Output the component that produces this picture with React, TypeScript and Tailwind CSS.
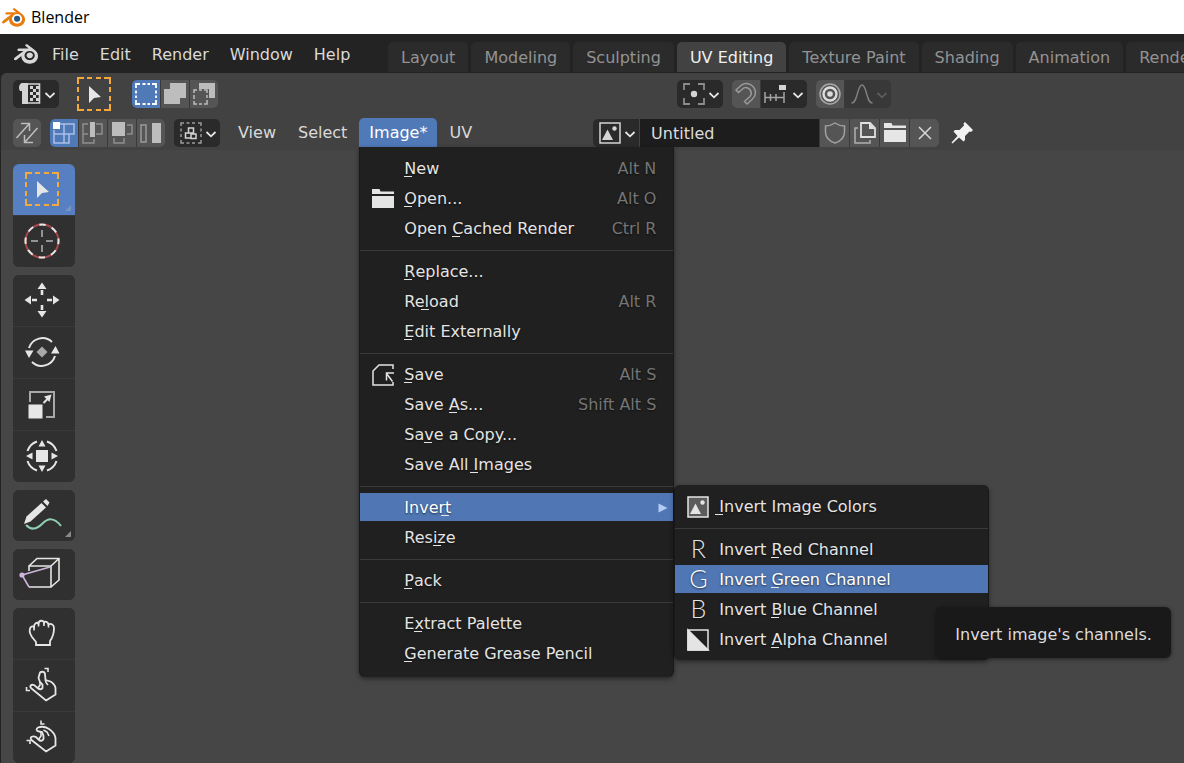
import React from 'react';
import clsx from 'clsx';
import { SiBlender } from 'react-icons/si';

interface MenuEntry {
  label: string;
  // index of the underlined accelerator letter
  hot: number;
  keys?: string;
  icon?: React.ReactNode;
  active?: boolean;
  submenu?: React.ReactNode;
  tip?: string;
}

interface IconProps {
  children: React.ReactNode;
}

const Icon: React.FC<IconProps> = ({ children }) => (
  <svg viewBox="0 0 22 22" className="h-[22px] w-[22px] shrink-0 overflow-visible" fill="none" stroke="currentColor" strokeWidth={1.5}>
    {children}
  </svg>
);

/* Toolbar drawings use a canvas centred on 0,0 */
const ToolIcon: React.FC<IconProps> = ({ children }) => (
  <svg viewBox="-20 -20 40 40" className="h-10 w-10 shrink-0 overflow-visible" fill="none" stroke="#e6e6e6" strokeWidth={2}>
    {children}
  </svg>
);

const Chevron = ({ dim }: { dim?: boolean }) => (
  <svg viewBox="0 0 12 12" className={clsx('mt-[2px] h-3 w-3 shrink-0', dim ? 'text-[#5c5c5c]' : 'text-[#e6e6e6]')} fill="none" stroke="currentColor" strokeWidth={1.8}>
    <path d="M1.5 4 6 8.3 10.5 4" />
  </svg>
);

const FolderIcon = () => (
  <Icon>
    <path d="M0 6V1h7.5l1 2.500H22V6zM0 8h22v12H0z" fill="currentColor" stroke="none" />
  </Icon>
);

const SaveIcon = () => (
  <Icon>
    <path d="M21 5V1H7L1 7v14h20v-3" />
    <path d="M20.500 17.500 14.500 9.500M14.500 16.500V9H22" />
  </Icon>
);

const PictureIcon = ({ filled }: { filled?: boolean }) => (
  <Icon>
    <rect x="1" y="1" width="20" height="20" fill={filled ? '#5c5c5c' : 'none'} />
    <path d="M3 18 8.500 7.500 14 18z" fill="currentColor" stroke="none" />
    <circle cx="15.500" cy="6.500" r="2.200" fill="currentColor" stroke="none" />
  </Icon>
);

const AlphaIcon = () => (
  <Icon>
    <rect x="1" y="1" width="20" height="20" />
    <path d="M1 1v20h20z" fill="currentColor" />
  </Icon>
);

const Letter = ({ children }: { children: string }) => (
  <span aria-hidden="true" className="w-[22px] pb-1 text-center font-['Lato',sans-serif] text-[25px] leading-6 font-light">{children}</span>
);

const BoxSelectArt = ({ color = '#f5a93a' }: { color?: string }) => (
  <>
    <path d="M-16 -10V-16H-10M10 -16H16V-10M16 10V16H10M-10 16H-16V10" stroke={color} />
    <path d="M-7 -16H-2M2 -16H7M-7 16H-2M2 16H7M-16 -7V-2M-16 2V7M16 -7V-2M16 2V7" stroke={color} />
    <path d="M-5 -8V9L0 4 7 3z" fill="#e6e6e6" stroke="none" />
  </>
);

const TABS = ['Layout', 'Modeling', 'Sculpting', 'UV Editing', 'Texture Paint', 'Shading', 'Animation', 'Rendering'];

const MenuItem: React.FC<MenuEntry> = ({ label, hot, keys, icon, active, submenu, tip }) => {
  const thin = 'Iltz'.includes(label[hot]);
  return (
    <li role="none" className="relative py-px">
      <button
        role="menuitem"
        type="button"
        aria-haspopup={submenu ? 'menu' : undefined}
        className={clsx(
          'flex h-7 w-full items-center pt-[2px] pr-[17px] pl-3 text-left [text-shadow:0_1px_2px_rgba(0,0,0,0.6)]',
          active ? 'bg-[#5077b3] text-white' : 'text-[#e4e4e4]',
        )}
      >
        <span className="mr-[10px] flex w-[22px] shrink-0">{icon}</span>
        <span className="flex-1 whitespace-pre">
          {label.slice(0, hot)}
          <span className={clsx("relative after:absolute after:bottom-px after:h-px after:w-2 after:bg-[#e4e4e4] after:content-['']", thin ? 'after:-left-1' : 'after:left-0')}>
            {label[hot]}
          </span>
          {label.slice(hot + 1)}
        </span>
        {keys && <span className="text-[#757575]">{keys}</span>}
        {submenu && (
          <svg viewBox="0 0 10 10" className="-mr-3 h-[10px] w-[10px] fill-[#b4cbf5]">
            <path d="M0.500 0.500 9.500 5 0.500 9.500z" />
          </svg>
        )}
      </button>
      {submenu}
      {tip && (
        <div role="tooltip" className="absolute top-[43px] left-[261px] z-30 rounded-md bg-[#191919] px-[19px] pt-4 pb-[11px] leading-6 whitespace-nowrap text-[#dcdcdc] shadow-[0_1px_4px_rgba(0,0,0,0.5)]">
          {tip}
        </div>
      )}
    </li>
  );
};

const Menu = ({ groups, label, className }: { groups: MenuEntry[][]; label: string; className: string }) => (
  <ul role="menu" aria-label={label} className={clsx('absolute z-20 w-[315px] border-x border-[#191919] bg-[#202020] pt-[6px] shadow-[0_2px_5px_rgba(0,0,0,0.45)]', className)}>
    {groups.map((group, i) => (
      <React.Fragment key={i}>
        {i > 0 && <li role="separator" className="mt-[7px] mb-[5px] h-px bg-[#3a3a3a]" />}
        {group.map((entry) => (
          <MenuItem key={entry.label} {...entry} />
        ))}
      </React.Fragment>
    ))}
  </ul>
);

const invertGroups: MenuEntry[][] = [
  [{ label: 'Invert Image Colors', hot: 0, icon: <PictureIcon filled /> }],
  [
    { label: 'Invert Red Channel', hot: 7, icon: <Letter>R</Letter> },
    { label: 'Invert Green Channel', hot: 7, icon: <Letter>G</Letter>, active: true, tip: "Invert image's channels." },
    { label: 'Invert Blue Channel', hot: 7, icon: <Letter>B</Letter> },
    { label: 'Invert Alpha Channel', hot: 7, icon: <AlphaIcon /> },
  ],
];

const imageGroups: MenuEntry[][] = [
  [
    { label: 'New', hot: 0, keys: 'Alt N' },
    { label: 'Open...', hot: 0, keys: 'Alt O', icon: <FolderIcon /> },
    { label: 'Open Cached Render', hot: 5, keys: 'Ctrl R' },
  ],
  [
    { label: 'Replace...', hot: 0 },
    { label: 'Reload', hot: 2, keys: 'Alt R' },
    { label: 'Edit Externally', hot: 0 },
  ],
  [
    { label: 'Save', hot: 0, keys: 'Alt S', icon: <SaveIcon /> },
    { label: 'Save As...', hot: 5, keys: 'Shift Alt S' },
    { label: 'Save a Copy...', hot: 2 },
    { label: 'Save All Images', hot: 9 },
  ],
  [
    {
      label: 'Invert',
      hot: 5,
      active: true,
      submenu: <Menu label="Invert" groups={invertGroups} className="-top-[7px] left-[314px] rounded-md pb-[6px]" />,
    },
    { label: 'Resize', hot: 4 },
  ],
  [{ label: 'Pack', hot: 0 }],
  [
    { label: 'Extract Palette', hot: 1 },
    { label: 'Generate Grease Pencil', hot: 0 },
  ],
];

interface HeaderButtonProps {
  label: string;
  children: React.ReactNode;
  active?: boolean;
  wide?: boolean;
}

const HeaderButton: React.FC<HeaderButtonProps> = ({ label, children, active, wide }) => (
  <button
    type="button"
    aria-label={label}
    className={clsx('flex h-7 items-center justify-center', wide ? 'w-[29px]' : 'w-7', active ? 'bg-[#5079b8] text-white' : 'bg-[#555555] text-[#bdbdbd]')}
  >
    {children}
  </button>
);

const Picker: React.FC<{ label: string; children: React.ReactNode; dim?: boolean; className?: string }> = ({ label, children, dim, className = 'rounded-[5px]' }) => (
  <button
    type="button"
    aria-label={label}
    aria-haspopup="menu"
    className={clsx('flex h-7 items-center gap-[3px] pr-[3px] pl-[6px]', dim ? 'bg-[#383838] text-[#808080]' : 'bg-[#2a2a2a] text-[#d4d4d4]', className)}
  >
    {children}
    <Chevron dim={dim} />
  </button>
);

const Group = ({ children, className }: { children: React.ReactNode; className?: string }) => (
  <div className={clsx('flex gap-px overflow-hidden rounded-[5px] bg-[#3a3a3a]', className)}>{children}</div>
);

const ToolSettings = () => (
  <div className="flex h-[42px] items-center pl-3">
    <Picker label="Editor type">
      <Icon>
        <path d="M5 1H20.500V20H9" strokeWidth={1.600} />
        <path d="M3 0H9V21H3V8H1C-0.500 6 -0.500 1 3 0z" fill="currentColor" stroke="none" />
        <path d="M11 3h3v3h-3zM17 3h3v3h-3zM14 6h3v3h-3zM11 9h3v3h-3zM17 9h3v3h-3zM14 12h3v3h-3zM11 15h3v3h-3zM17 15h3v3h-3z" fill="currentColor" stroke="none" />
      </Icon>
    </Picker>
    <div className="ml-[15px] flex h-10 w-10 items-center justify-center">
      <ToolIcon>
        <BoxSelectArt />
      </ToolIcon>
    </div>
    <Group className="ml-[18px]">
      <HeaderButton label="Set selection" active>
        <Icon>
          <path d="M1 5V1H5M17 1H21V5M21 17V21H17M5 21H1V17M7.500 1H10.500M12.500 1H15M7.500 21H10.500M12.500 21H15M1 7.500V10.500M1 12.500V15M21 7.500V10.500M21 12.500V15" strokeWidth={1.800} />
        </Icon>
      </HeaderButton>
      <HeaderButton label="Extend selection">
        <Icon>
          <path d="M6 0H22V15H16V21H0V6H6z" fill="currentColor" stroke="none" />
        </Icon>
      </HeaderButton>
      <HeaderButton label="Subtract selection">
        <Icon>
          <path d="M6 0H22V15H16V6H6z" fill="currentColor" stroke="none" />
          <path d="M1 10V7H4M6 7H9M11 7H14V10M14 12V15M14 17V21H11M9 21H6M4 21H1V18M1 16V12" />
        </Icon>
      </HeaderButton>
    </Group>
    <div className="ml-[459px] flex gap-[9px]">
      <Picker label="Pivot point">
        <Icon>
          <path d="M1 7V1H7M15 1H21V7M21 15V21H15M7 21H1V15" stroke="#8c8c8c" strokeWidth={1.800} />
          <circle cx="11" cy="11" r="3.200" fill="currentColor" stroke="none" />
        </Icon>
      </Picker>
      <Group>
        <HeaderButton label="Snap">
          <Icon>
            <path d="M1 7 6.500 2C12 -1.500 20 2 20.500 9.500 20.500 12 19 14.500 17.500 16L12 21 9.500 18.500 15 13.500C18 10 15 4.500 10.500 4.500 9.500 4.500 8.500 5 7.500 6L3.500 9.500z" stroke="#9a9a9a" />
          </Icon>
        </HeaderButton>
        <Picker label="Snap target" className="">
          <Icon>
            <path d="M-2 9V20M3.500 11V18M9 11V18M17 9V20M-2 14.500H17" stroke="#a5a5a5" />
            <path d="M12 2h7v5h-7z" fill="currentColor" stroke="none" />
          </Icon>
        </Picker>
      </Group>
      <Group>
        <HeaderButton label="Proportional editing">
          <Icon>
            <circle cx="11" cy="11" r="10" stroke="#a8a8a8" />
            <circle cx="11" cy="11" r="6.500" stroke="#dcdcdc" strokeWidth={2.400} />
            <circle cx="11" cy="11" r="2.800" fill="#dcdcdc" stroke="none" />
          </Icon>
        </HeaderButton>
        <Picker label="Proportional falloff" dim className="">
          <Icon>
            <path d="M0.500 20C7 20 6 2 11 2S15 20 21.500 20" />
          </Icon>
        </Picker>
      </Group>
    </div>
  </div>
);

const EditorHeader = () => (
  <div className="flex h-[35px] items-center pl-3 text-[#dadada]">
    <Group>
      <HeaderButton label="Sync selection">
        <Icon>
          <path d="M0.500 16 13 2M5 1.500H13.500V9M21.500 6 9 20M8.500 13V20.500H17" />
        </Icon>
      </HeaderButton>
    </Group>
    <Group className="ml-[9px]">
      <HeaderButton label="Vertex select" active>
        <Icon>
          <path d="M7 2H21V12H6M11 2V21M1 8V21H16V12M1 12H11" stroke="#a9c0e6" />
          <path d="M0 0h7v7H0z" fill="currentColor" stroke="none" />
        </Icon>
      </HeaderButton>
      <HeaderButton label="Edge select">
        <Icon>
          <path d="M6 2H1V12H6M1 12V21H12V17M14 2H20V12H14" stroke="#8e8e8e" />
          <path d="M8 0h5v15H8z" fill="currentColor" stroke="none" />
        </Icon>
      </HeaderButton>
      <HeaderButton label="Face select">
        <Icon>
          <path d="M16 3H21V12H16M3 16V21H13V16" stroke="#8e8e8e" />
          <path d="M1 0h13v14H1z" fill="currentColor" stroke="none" />
        </Icon>
      </HeaderButton>
      <HeaderButton label="Island select">
        <Icon>
          <path d="M1 3H6V20H1z" stroke="#9a9a9a" />
          <path d="M12 1h9v20h-9z" fill="currentColor" stroke="none" />
        </Icon>
      </HeaderButton>
    </Group>
    <div className="ml-[9px]">
      <Picker label="Sticky selection mode">
        <Icon>
          <path d="M1 4V1H4M6.500 1H9.500M12 1H15M18 1H21V4M21 6.500V9.500M21 12V15M21 18V21H18M15 21H12M9.500 21H6.500M4 21H1V18M1 15V12M1 9.500V6.500" stroke="#9a9a9a" />
          <path d="M8.500 6H13.500V11H8.500zM5.500 11H11V16H5.500zM11 12H16V16.500H11z" />
        </Icon>
      </Picker>
    </div>
    <nav aria-label="Editor menus" className="ml-[8px] flex gap-[2px]">
      <button type="button" className="h-[29px] px-[10px] pt-px">View</button>
      <button type="button" className="h-[29px] px-[10px] pt-px">Select</button>
      <div className="relative">
        <button type="button" aria-haspopup="menu" aria-expanded="true" className="h-[29px] rounded-t-[5px] bg-[#5079b8] px-[10px] pt-px text-white">
          Image*
        </button>
        <Menu label="Image" groups={imageGroups} className="top-[29px] left-0 rounded-b-md pb-[9px]" />
      </div>
      <button type="button" className="h-[29px] px-[10px] pt-px">UV</button>
    </nav>
    <div className="ml-[111px] flex overflow-hidden rounded-[5px]">
      <Picker label="Browse image" className="">
        <PictureIcon />
      </Picker>
      <input aria-label="Image name" defaultValue="Untitled" className="h-7 w-[180px] border-l border-[#444444] bg-[#1d1d1d] pt-px pl-[11px] text-[#dcdcdc] outline-none" />
      <div className="flex gap-px bg-[#3a3a3a] pl-px">
        <HeaderButton label="Fake user" wide>
          <Icon>
            <path d="M11 1C8 3 5 4 1.500 4V10C1.500 15 5 19 11 21 17 19 20.500 15 20.500 10V4C17 4 14 3 11 1z" stroke="#a0a0a0" />
          </Icon>
        </HeaderButton>
        <HeaderButton label="New image" wide>
          <Icon>
            <path d="M7 1H16L21 6V15H7z" stroke="#e0e0e0" strokeWidth={1.800} />
            <path d="M15 1v6h6z" fill="#e0e0e0" stroke="none" />
            <path d="M4 6H1V21H16V18" stroke="#b0b0b0" />
          </Icon>
        </HeaderButton>
        <HeaderButton label="Open image" wide>
          <span className="flex text-[#e6e6e6]">
            <FolderIcon />
          </span>
        </HeaderButton>
        <HeaderButton label="Unlink image" wide>
          <Icon>
            <path d="M5 5 17 17M17 5 5 17" stroke="#d8d8d8" />
          </Icon>
        </HeaderButton>
      </div>
    </div>
    <button type="button" aria-label="Pin" className="ml-3 text-[#f2f2f2]">
      <Icon>
        <path d="M14 0 22 8 20 10 18.500 9.500 14 14V18L12.500 19.500 8 15.500 1.500 21.500 0.500 20.500 6.500 14 2.500 9.500 4 8H8.500L13 3.500 12.500 1.500z" fill="currentColor" stroke="none" />
      </Icon>
    </button>
  </div>
);

interface Tool {
  name: string;
  art: React.ReactNode;
  active?: boolean;
  more?: boolean;
}

const TOOLS: Tool[][] = [
  [
    { name: 'Select Box', active: true, more: true, art: <BoxSelectArt /> },
    {
      name: 'Cursor',
      art: (
        <>
          <circle r="16.500" stroke="#a8474d" />
          <circle r="16.500" strokeDasharray="6.480 6.480" strokeDashoffset="3.240" />
          <path d="M-11 0H-4M4 0H11M0 -11V-4M0 4V11" stroke="#b4b4b4" strokeWidth={1.500} />
        </>
      ),
    },
  ],
  [
    {
      name: 'Move',
      art: (
        <>
          <path d="M0 -17.500 4.500 -11H-4.500zM0 17.500 4.500 11H-4.500zM-17.500 0 -11 -4.500V4.500zM17.500 0 11 -4.500V4.500z" fill="#e6e6e6" stroke="none" />
          <path d="M0 -10V-5M0 10V5M-10 0H-5M10 0H5" strokeWidth={2.600} />
        </>
      ),
    },
    {
      name: 'Rotate',
      art: (
        <>
          <path d="M-13 -4A14 14 0 0 1 10 -10M13 4A14 14 0 0 1 -10 10" />
          <path d="M-17 -1.500H-8.500L-13 6zM9 1.500H17.500L13.500 -6z" fill="#e6e6e6" stroke="none" />
          <path d="M0 -5.500 5.500 0 0 5.500 -5.500 0z" fill="#a8a8a8" stroke="none" />
        </>
      ),
    },
    {
      name: 'Scale',
      art: (
        <>
          <path d="M-12 -2V-12H12V13H4" stroke="#a8a8a8" />
          <path d="M-13.500 0.500H0.500V14.500H-13.500z" fill="#e6e6e6" stroke="none" />
          <path d="M1.500 -1 6 -5.500" />
          <path d="M9.500 -9.500 7.500 -2 2 -7.500z" fill="#e6e6e6" stroke="none" />
        </>
      ),
    },
    {
      name: 'Transform',
      art: (
        <>
          <path d="M-14.500 -5A15 15 0 0 1 -5 -14.500M5 -14.500A15 15 0 0 1 14.500 -5M14.500 5A15 15 0 0 1 5 14.500M-5 14.500A15 15 0 0 1 -14.500 5" />
          <path d="M0 -16 3.500 -9.500H-3.500zM0 16 3.500 9.500H-3.500zM-16 0 -9.500 -3.500V3.500zM16 0 9.500 -3.500V3.500zM-6 -6H6V6H-6z" fill="#e6e6e6" stroke="none" />
        </>
      ),
    },
  ],
  [
    {
      name: 'Annotate',
      more: true,
      art: (
        <>
          <path d="M-16 10C-11 15 -6 15 0 9S12 2 19 11" stroke="#8fd0b0" />
          <path d="M-18 9 -15.500 1.500 -0.500 -12 4 -7.500 -11.500 6.500z" fill="#e6e6e6" stroke="none" />
          <path d="M1 -13.500 4 -16 7.500 -12.500 5.500 -9z" fill="#e6e6e6" stroke="none" />
        </>
      ),
    },
  ],
  [
    {
      name: 'Rip Region',
      art: (
        <>
          <path d="M-13 -3V-8H9V13H-13M-13 -8 -5 -15.500H17V6L9 13M9 -8 17 -15.500" strokeWidth={1.600} />
          <path d="M8 -7 -20 1 -13 13" stroke="#cdb4dc" strokeWidth={1.600} />
          <circle cx="-20" cy="1" r="2.600" fill="#cdb4dc" stroke="none" />
        </>
      ),
    },
  ],
  [
    {
      name: 'Grab',
      art: (
        <>
          <path d="M-6 12V9L-10 4C-12 1 -13 -3 -11.500 -5.500 -10.500 -7 -9 -7 -8 -6 -8 -10 -5 -11 -3.500 -9.500 -3 -13 1.500 -13 2 -10.500 3 -12 6 -11.500 6.500 -8.500 9 -10 12 -8 12 -5 12 0 11 4 8 8V12z" strokeWidth={1.800} />
          <path d="M-8 -6V-2.500M-3.500 -9.500V-6.500M2 -10.500V-7M6.500 -8.500V-5.500" strokeWidth={1.600} />
        </>
      ),
    },
    {
      name: 'Relax',
      art: (
        <>
          <path d="M4 15.500 13.500 9.500V3C13 0 11 -2 8.500 -3.500L3.500 -5 3 -11C2.500 -14 -2 -14 -2.500 -11L-3.500 -7 -2 -3 0.500 -0.500V3C-0.500 5 -3 4.500 -5 2.500L-8 0C-11 -1 -13 1.500 -10.500 3.500z" strokeWidth={1.800} />
          <path d="M3.500 -5 4 -2.500 6 0M-2 -3V0L-4 3" strokeWidth={1.600} />
          <path d="M2.500 -16.500H6V-13M-15.500 2V5.500H-12" strokeWidth={1.600} />
        </>
      ),
    },
    {
      name: 'Pinch',
      art: (
        <>
          <path d="M4 14.500 13.500 8.500V1C13 -2 10 -6 7 -8 4 -10 0 -11 -4 -9.500 -6.500 -8 -5.500 -5.500 -3 -5.500L0 -5 1.500 -1V2C0.500 4 -1.500 4.500 -3.500 2.500L-6 0C-9 -1.500 -13 0 -10.500 3z" strokeWidth={1.800} />
          <path d="M1.500 -7 5 -5 7 -1M-1 -5V-1L-3.500 2.500" strokeWidth={1.600} />
          <path d="M-1 -16.500V-13H2.500M-15.500 3.500H-12V7" strokeWidth={1.600} />
        </>
      ),
    },
  ],
];

const Toolbar = () => (
  <div role="toolbar" aria-label="Tools" className="flex w-[62px] flex-col gap-2">
    {TOOLS.map((group) => (
      <div key={group[0].name} className="flex shrink-0 flex-col gap-px overflow-hidden rounded-md bg-[#3a3a3a]">
        {group.map(({ name, art, active, more }) => (
          <button key={name} type="button" aria-label={name} className={clsx('relative flex h-[51px] items-center justify-center pr-1 pb-[2px]', active ? 'bg-[#5680c2]' : 'bg-[#303030]')}>
            <ToolIcon>{art}</ToolIcon>
            {more && (
              <svg viewBox="0 0 6 6" className={clsx('absolute right-1 bottom-1 h-[6px] w-[6px]', active ? 'fill-[#7b93c4]' : 'fill-[#8a8a8a]')}>
                <path d="M6 0V6H0z" />
              </svg>
            )}
          </button>
        ))}
      </div>
    ))}
  </div>
);

export default function App() {
  return (
    <div className="flex h-screen flex-col overflow-hidden bg-[#232323] font-['DejaVu_Sans',sans-serif] text-[16px] leading-6">
      <header className="flex h-[34px] shrink-0 items-center gap-[6px] bg-white pl-[2px] font-['Open_Sans',sans-serif] text-[16px] text-black">
        <svg viewBox="0 0 24 24" className="h-[23px] w-[23px]" aria-hidden="true">
          <SiBlender size={24} color="#e87d0d" />
          <circle cx="15.750" cy="13.350" r="5" fill="#ffffff" />
          <circle cx="15.750" cy="13.350" r="3.200" fill="#265787" />
        </svg>
        Blender
      </header>

      <div className="flex h-[39px] shrink-0 overflow-hidden pl-[14px]">
        <SiBlender size={24} color="#d8d8d8" className="mt-[8px] shrink-0" />
        <nav aria-label="Main menu" className="flex w-[350px] shrink-0 items-center gap-px pt-[2px] pl-1 text-[#dadada]">
          {['File', 'Edit', 'Render', 'Window', 'Help'].map((name) => (
            <button key={name} type="button" className="px-[10px]">{name}</button>
          ))}
        </nav>
        <div role="tablist" aria-label="Workspaces" className="flex items-end gap-[3px] pb-px">
          {TABS.map((tab) => (
            <button
              key={tab}
              role="tab"
              type="button"
              aria-selected={tab === 'UV Editing'}
              className={clsx('h-[30px] shrink-0 rounded-t-[5px] px-[13px] pt-[2px] whitespace-nowrap', tab === 'UV Editing' ? 'bg-[#424242] text-[#f0f0f0]' : 'bg-[#2b2b2b] text-[#939393]')}
            >
              {tab}
            </button>
          ))}
        </div>
      </div>

      <main className="ml-px flex min-h-0 flex-1 flex-col overflow-hidden rounded-tl-md bg-[#464646]">
        <div className="flex shrink-0 flex-col bg-[#424242]">
          <ToolSettings />
          <EditorHeader />
        </div>
        <div className="min-h-0 flex-1 px-[12px] pt-[14px]">
          <Toolbar />
        </div>
      </main>
    </div>
  );
}
